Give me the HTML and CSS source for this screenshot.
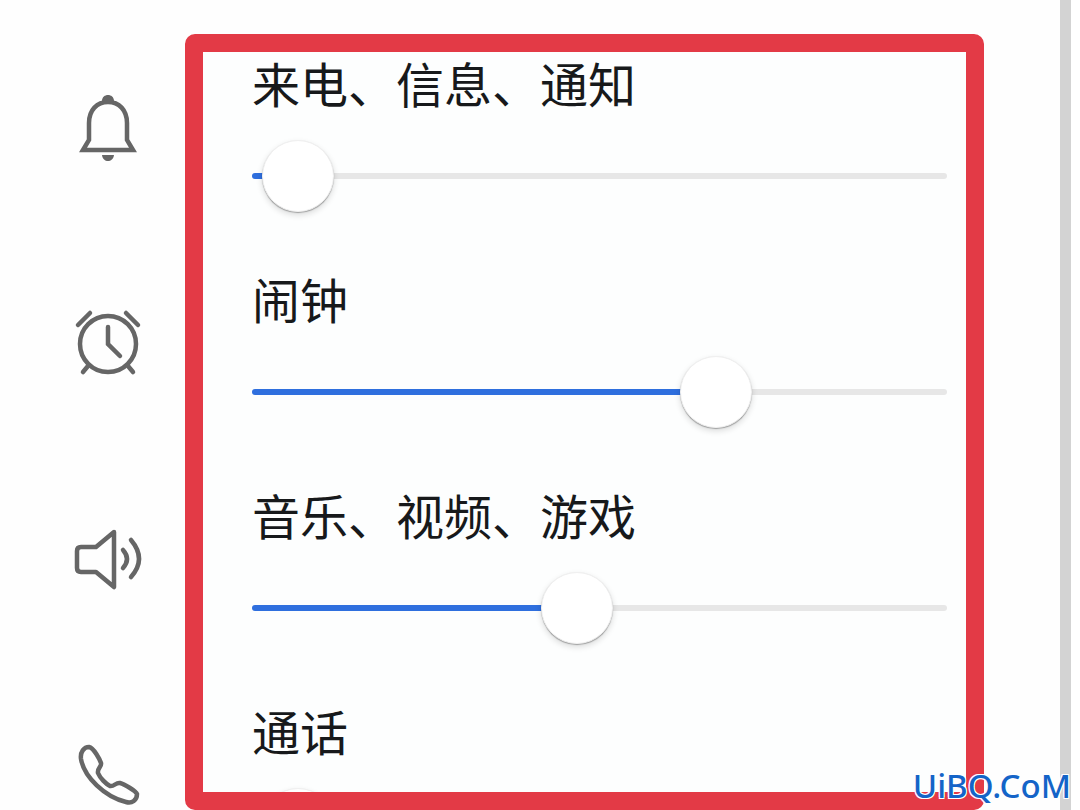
FILE: index.html
```html
<!DOCTYPE html>
<html lang="zh-CN">
<head>
<meta charset="utf-8">
<meta name="viewport" content="width=device-width, initial-scale=1">
<title>音量</title>
<link rel="stylesheet" href="styles.css">
</head>
<body>
<main class="page">
  <div class="icons" aria-hidden="true">
    <svg class="icon" viewBox="0 0 100 100">
      <path d="M23 70 L29 60 V43 C29 30 37 22 48 22 S67 30 67 43 V60 L73 70 Z"/>
      <path class="solid" d="M42 21 C42 13 54 13 54 21 Z M42 75 H54 C53 83 43 83 42 75 Z"/>
    </svg>
    <svg class="icon" viewBox="0 0 100 100">
      <circle cx="48" cy="48" r="28"/>
      <path d="M48 31 V48 L60 60 M18 29 L30 17 M66 17 L78 29 M28 70 L23 76 M68 70 L73 76"/>
    </svg>
    <svg class="icon round" viewBox="0 0 100 100">
      <path d="M54 20 L36 35 H21 Q17 35 17 39 V56 Q17 60 21 60 H36 L54 75 Z"/>
      <path d="M63 38 Q71 47 63 56 M71 28 Q87 47 71 65"/>
    </svg>
    <svg class="icon round" viewBox="0 0 100 100">
      <path d="M21 31 C20 24 24 19 29 19 C34 20 40 32 41 35 C42 39 37 40 38 45 C40 50 46 56 50 58 C54 59 56 54 60 55 C64 56 76 63 77 66 C77 72 72 76 66 74 C45 69 24 49 21 31 Z"/>
    </svg>
  </div>
  <form class="panel">
    <div class="row">
      <label class="name" for="ring">来电、信息、通知</label>
      <input class="slider" id="ring" type="range" max="1000" value="16" style="--fill: 5%">
    </div>
    <div class="row">
      <label class="name" for="alarm">闹钟</label>
      <input class="slider" id="alarm" type="range" max="1000" value="687" style="--fill: 67%">
    </div>
    <div class="row">
      <label class="name" for="media">音乐、视频、游戏</label>
      <input class="slider" id="media" type="range" max="1000" value="464" style="--fill: 47%">
    </div>
    <div class="row">
      <label class="name" for="call">通话</label>
      <input class="slider" id="call" type="range" max="1000" value="16" style="--fill: 5%">
    </div>
  </form>
</main>
<span class="mark">UiBQ.CoM</span>
</body>
</html>
```
FILE: styles.css
```css
* {
  box-sizing: border-box;
}

body {
  position: relative;
  margin: 0;
  background: #fff;
  color: #17191b;
  font-family: "Noto Sans CJK SC", "Noto Sans", sans-serif;
}

.page {
  display: flex;
  height: 100vh;
  margin-right: 9px;
  padding: 34px 76px 0 60px;
  border-right: 11px solid #d3d3d3;
  background: #fefefe;
  overflow: hidden;
}

.icons {
  display: flex;
  flex: none;
  flex-direction: column;
  gap: 116px;
  width: 125px;
  padding-top: 46px;
}

.icon {
  flex: none;
  width: 100px;
  height: 100px;
  fill: none;
  stroke: #666;
  stroke-width: 4.5;
  stroke-linecap: round;
}

.round {
  stroke-linejoin: round;
}

.icon .solid {
  fill: #666;
  stroke: none;
}

.panel {
  flex: 1;
  min-width: 0;
  border: 18px solid #e33a46;
  border-radius: 10px;
  background: #fdfefe;
  overflow: hidden;
}

.row {
  display: flex;
  flex-direction: column;
  gap: 27px;
  height: 216px;
  padding: 0 19px 0 49px;
}

.name {
  font-size: 48px;
  line-height: 60px;
}

.slider {
  width: 100%;
  height: 74px;
  margin: 0;
  appearance: none;
  background: none;
}

.slider::-webkit-slider-runnable-track {
  height: 6px;
  border-radius: 3px;
  background: linear-gradient(to right, #2f6fde var(--fill), #e7e7e7 var(--fill));
}

.slider::-webkit-slider-thumb {
  width: 72px;
  height: 72px;
  margin-top: -33px;
  appearance: none;
  border: 1px solid #f0f0f0;
  border-radius: 50%;
  background: #fff;
  box-shadow: 0 1px 1px rgba(0, 0, 0, 0.3), 0 3px 6px rgba(0, 0, 0, 0.14);
}

.mark {
  position: absolute;
  right: 9px;
  bottom: 4px;
  color: #1464c8;
  font-family: "Noto Sans", sans-serif;
  font-size: 33px;
  font-weight: 500;
  line-height: 40px;
  text-shadow: 1px 1px #fff, -1px 1px #fff, 1px -1px #fff, -1px -1px #fff;
}
```
